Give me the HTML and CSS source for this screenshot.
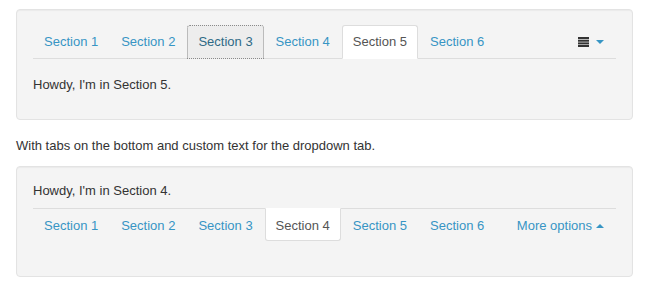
FILE: index.html
```html
<!DOCTYPE html>
<html>
<head>
<meta charset="utf-8">
<link rel="stylesheet" href="styles.css">
</head>
<body>
<div class="well">
  <ul class="tabs tabs-top">
    <li><a class="tab">Section 1</a></li>
    <li><a class="tab">Section 2</a></li>
    <li><a class="tab focus">Section 3</a></li>
    <li><a class="tab">Section 4</a></li>
    <li><a class="tab active">Section 5</a></li>
    <li><a class="tab">Section 6</a></li>
    <li class="drop"><a class="tab dd"><svg class="list-icon" width="11" height="10" viewBox="0 0 11 10"><rect x="0" y="0" width="11" height="2" fill="#333"/><rect x="0" y="2.7" width="11" height="2" fill="#333"/><rect x="0" y="5.4" width="11" height="2" fill="#333"/><rect x="0" y="8" width="11" height="2" fill="#333"/></svg><span class="caret down"></span></a></li>
  </ul>
  <div class="content content-top">Howdy, I'm in Section 5.</div>
</div>
<p class="caption">With tabs on the bottom and custom text for the dropdown tab.</p>
<div class="well">
  <div class="content content-bottom">Howdy, I'm in Section 4.</div>
  <ul class="tabs tabs-bottom">
    <li><a class="tab">Section 1</a></li>
    <li><a class="tab">Section 2</a></li>
    <li><a class="tab">Section 3</a></li>
    <li><a class="tab active">Section 4</a></li>
    <li><a class="tab">Section 5</a></li>
    <li><a class="tab">Section 6</a></li>
    <li class="drop"><a class="tab dd">More options<span class="caret up"></span></a></li>
  </ul>
</div>
</body>
</html>
```
FILE: styles.css
```css
* { box-sizing: border-box; }
html, body { background: #fff; }
body {
  margin: 0;
  padding: 9px 25px 0 16px;
  font-family: "Liberation Sans", Arial, sans-serif;
  font-size: 13px;
  line-height: 18px;
  color: #333;
}
.well {
  width: 617px;
  background: #f4f4f4;
  border: 1px solid #e3e3e3;
  border-radius: 4px;
  padding: 15px 16px;
  box-shadow: inset 0 1px 1px rgba(0,0,0,0.04);
}
.tabs {
  list-style: none;
  margin: 0;
  padding: 0;
  display: flex;
}
.tabs-top { border-bottom: 1px solid #ddd; }
.tabs-bottom { border-top: 1px solid #ddd; margin-bottom: 20px; }
.tabs li { display: flex; flex-shrink: 0; }
.tab {
  display: flex;
  align-items: center;
  padding: 0 10px;
  margin-right: 1px;
  color: #3795c4;
  border: 1px solid transparent;
  white-space: nowrap;
  cursor: pointer;
}
.tabs-top .tab { height: 34px; margin-bottom: -1px; border-radius: 3px 3px 0 0; }
.tabs-bottom .tab { height: 33px; padding-top: 2px; margin-top: -1px; border-radius: 0 0 3px 3px; }
.tab.active {
  background: #fff;
  color: #555;
  border-color: #ddd;
}
.tabs-top .tab.active { border-bottom-color: transparent; }
.tabs-bottom .tab.active { border-top-color: transparent; }
.tab.focus {
  background: #ededed;
  color: #2f6a86;
  outline: 1px dotted #8a8a8a;
  outline-offset: -1px;
}
.drop { margin-left: auto; }
.dd { padding: 0 11px 0 11px; margin-right: 0; }
.tabs-bottom .dd { padding-right: 11px; }
.list-icon { display: block; margin-right: 7px; }
.caret {
  display: inline-block;
  width: 0;
  height: 0;
  border-left: 4px solid transparent;
  border-right: 4px solid transparent;
  margin-left: 4px;
}
.list-icon + .caret { margin-left: 0; }
.caret.down { border-top: 4px solid #3795c4; }
.caret.up { border-bottom: 4px solid #3795c4; }
.content-top { padding: 17px 0 10px; }
.content-bottom { padding: 0 0 8px; }
.caption { margin: 17px 0 11px; }
```
